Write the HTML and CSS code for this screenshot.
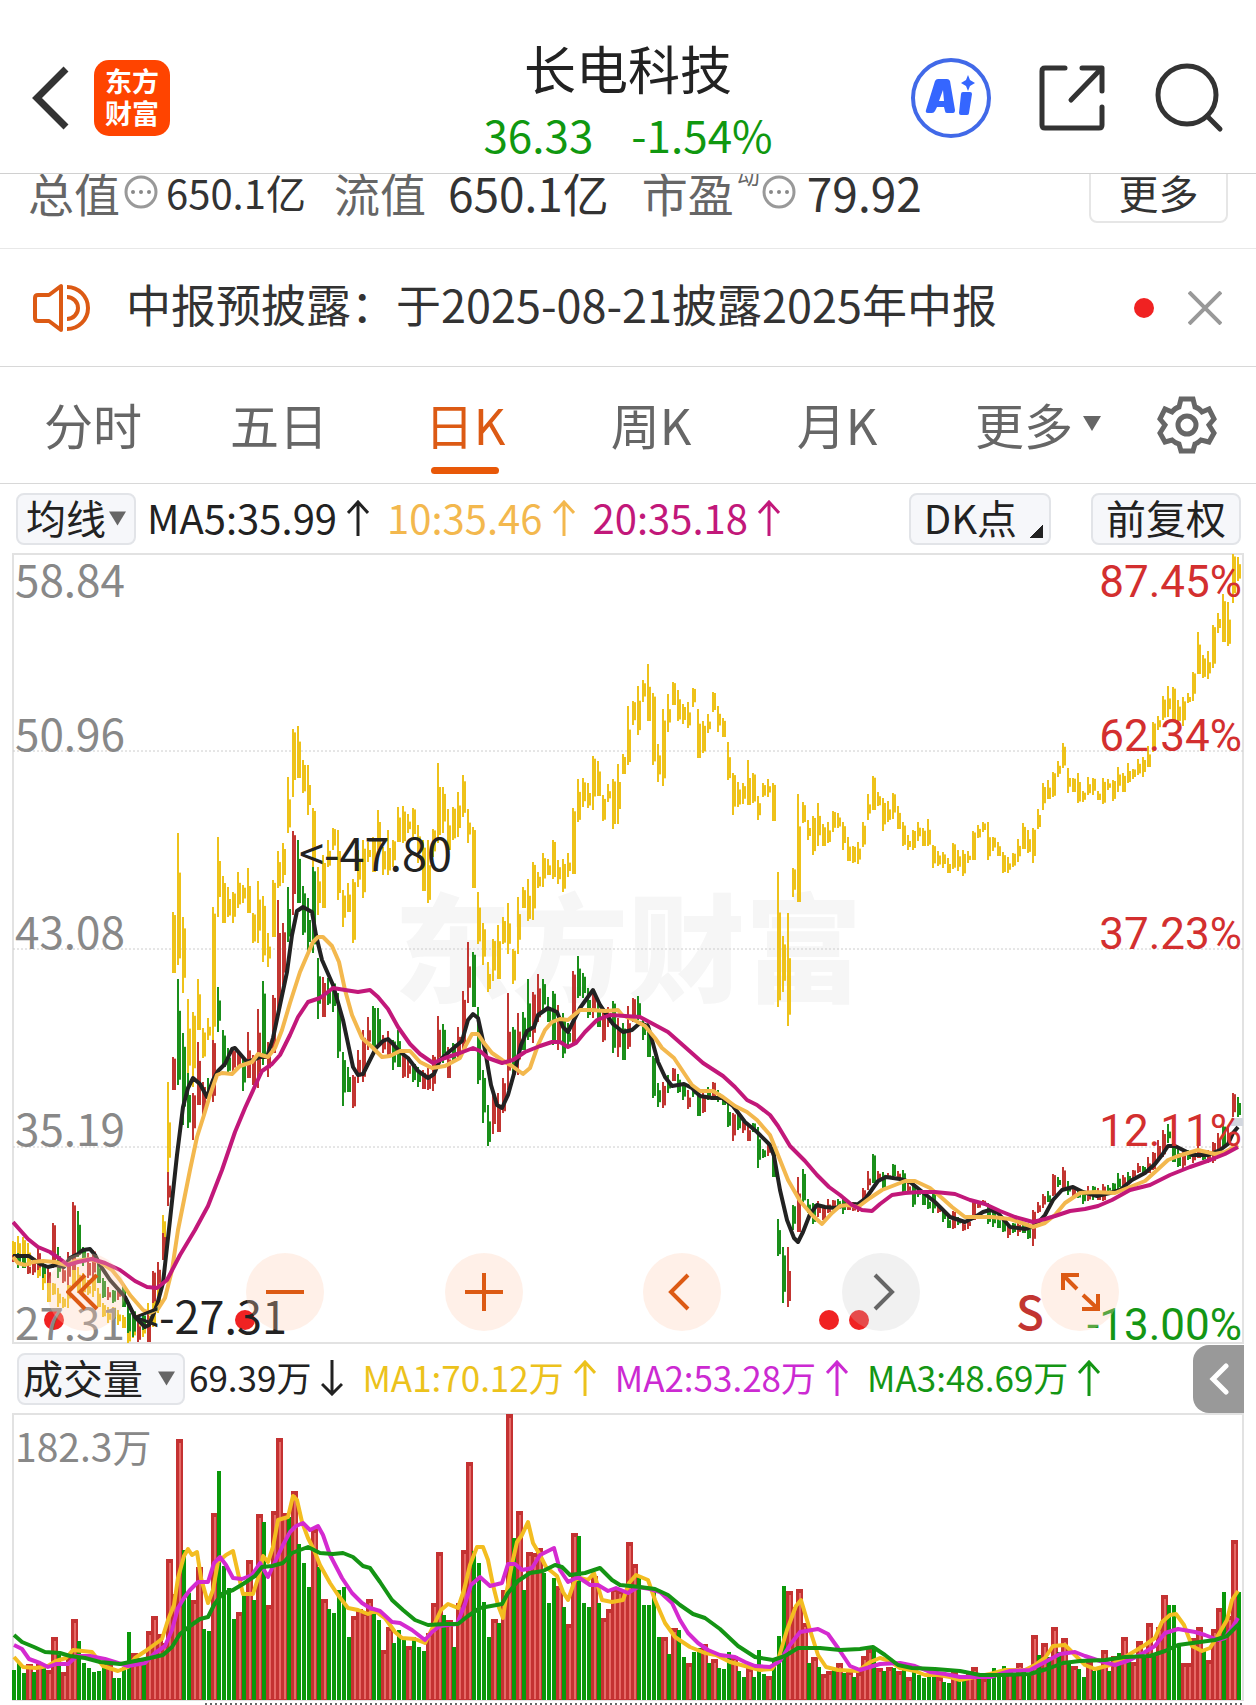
FILE: index.html
```html
<!DOCTYPE html>
<html lang="zh-CN">
<head>
<meta charset="utf-8">
<meta name="viewport" content="width=device-width">
<title>长电科技</title>
<link rel="stylesheet" href="styles.css">
</head>
<body>
<header class="topbar">
  <div class="topbar-left">
    <button class="icon-btn" type="button" aria-label="返回">
      <svg width="38" height="64" viewBox="0 0 38 64"><path d="M34 3 5 32 34 61" fill="none" stroke="#333" stroke-width="7"/></svg>
    </button>
    <a class="logo" href="#"><span>东方</span><span>财富</span></a>
  </div>
  <div class="title">
    <h1>长电科技</h1>
    <p class="quote"><span>36.33</span><span>-1.54%</span></p>
  </div>
  <div class="topbar-right">
    <button class="icon-btn" type="button" aria-label="AI">
      <svg width="82" height="82" viewBox="0 0 82 82"><circle cx="41" cy="41" r="38" fill="none" stroke="#4169e8" stroke-width="4"/><path fill="#3566ff" fill-rule="evenodd" d="M28 22h9q2 0 3 2l5 29q0 3-2 3h-6q-2 0-2-2l-1-4h-7l-2 4q-1 2-3 2h-4q-3 0-2-3l9-29q1-2 3-2zM33 33l-4 11h5z"/><path fill="#3566ff" d="M53 35h7q2 0 2 2l-3 19q0 2-2 2h-6q-2 0-2-2l2-19q0-2 2-2zM58 18l2 5 5 3-5 3-2 5-2-5-5-3 5-3z"/></svg>
    </button>
    <button class="icon-btn" type="button" aria-label="分享">
      <svg width="68" height="68" viewBox="0 0 68 68"><path d="M26 4H6Q3 4 3 7V61Q3 64 6 64H60Q63 64 63 61V43M43 4H63V27M61 6 32 36" fill="none" stroke="#333" stroke-width="5" stroke-linecap="round" stroke-linejoin="round"/></svg>
    </button>
    <button class="icon-btn" type="button" aria-label="搜索">
      <svg width="70" height="70" viewBox="0 0 70 70"><circle cx="33" cy="32" r="29" fill="none" stroke="#333" stroke-width="5"/><path d="M53 53 66 66" stroke="#333" stroke-width="5" stroke-linecap="round"/></svg>
    </button>
  </div>
</header>

<section class="metrics">
  <div class="metric"><span class="metric-name">总值</span><svg class="info" viewBox="0 0 34 34"><use href="#dots"/></svg><span class="metric-value small">650.1亿</span></div>
  <div class="metric"><span class="metric-name">流值</span><span class="metric-value wide">650.1亿</span></div>
  <div class="metric"><span class="metric-name">市盈</span><sup>动</sup><svg class="info tight" viewBox="0 0 34 34"><g id="dots"><circle cx="17" cy="17" r="15" fill="none" stroke="#999" stroke-width="3"/><circle cx="9" cy="17" r="2" fill="#888"/><circle cx="17" cy="17" r="2" fill="#888"/><circle cx="25" cy="17" r="2" fill="#888"/></g></svg><span class="metric-value">79.92</span></div>
  <button class="more-btn" type="button">更多</button>
</section>

<section class="notice">
  <svg width="60" height="50" viewBox="0 0 60 50" fill="none" stroke="#dc5a14" stroke-width="4"><path d="M29 3V47L17 38H6Q3 38 3 35V15Q3 12 6 12H17Z" stroke-linejoin="round"/><path d="M35 14a11 11 0 0 1 0 22M35 4a21 21 0 0 1 0 42"/></svg>
  <a href="#">中报预披露：于2025-08-21披露2025年中报</a>
  <i class="dot"></i>
  <button class="icon-btn" type="button" aria-label="关闭"><svg width="34" height="34" viewBox="0 0 34 34"><path d="M1 1 33 33M33 1 1 33" stroke="#999" stroke-width="4"/></svg></button>
</section>

<nav class="tabs">
  <button type="button">分时</button>
  <button type="button">五日</button>
  <button type="button" class="active">日K</button>
  <button type="button">周K</button>
  <button type="button">月K</button>
  <button type="button">更多<svg width="18" height="15" viewBox="0 0 18 15"><path d="M0 0H18L9 15Z" fill="#666"/></svg></button>
  <button type="button" aria-label="设置"><svg width="60" height="60" viewBox="0 0 60 60" fill="none" stroke="#666" stroke-width="5"><path d="M24 4H36L38 12Q42 13 45 17L52 14 57 24 52 30 57 38 52 47 44 45Q41 48 38 49L36 56H24L22 49Q18 48 15 45L8 47 3 38 8 30 3 24 8 14 15 17Q18 13 22 12Z"/><circle cx="30" cy="30" r="9"/></svg></button>
</nav>

<div class="bar">
  <button class="chip" type="button">均线<svg width="17" height="15" viewBox="0 0 18 15"><path d="M0 0H18L9 15Z" fill="#666"/></svg></button>
  <span class="ma ink">MA5:35.99<svg class="arrow" viewBox="0 0 22 36"><path d="M11 36V3M1 13 11 2 21 13"/></svg></span>
  <span class="ma orange">10:35.46<svg class="arrow" viewBox="0 0 22 36"><path d="M11 36V3M1 13 11 2 21 13"/></svg></span>
  <span class="ma magenta">20:35.18<svg class="arrow" viewBox="0 0 22 36"><path d="M11 36V3M1 13 11 2 21 13"/></svg></span>
  <button class="chip corner" type="button">DK点</button>
  <button class="chip" type="button">前复权</button>
</div>

<main>
  <div class="chart">
    <svg id="price" viewBox="12 553 1232 791" role="img" aria-label="日K线"></svg>
    <div class="tools">
      <button type="button" aria-label="最早"><svg viewBox="0 0 40 40"><path d="M19 3 2 20 19 37M31 3 14 20 31 37"/></svg></button>
      <button type="button" aria-label="缩小"><svg viewBox="0 0 40 40"><path d="M1 20H39"/></svg></button>
      <button type="button" aria-label="放大"><svg viewBox="0 0 40 40"><path d="M1 20H39M20 1V39"/></svg></button>
      <button type="button" aria-label="左移"><svg viewBox="0 0 40 40"><path d="M26 3 9 20 26 37"/></svg></button>
      <button type="button" aria-label="右移" class="off"><svg viewBox="0 0 40 40"><path d="M14 3 31 20 14 37"/></svg></button>
      <button type="button" aria-label="全屏"><svg viewBox="0 0 40 40"><path d="M3 18V3H19M4 4 17 17M38 22V37H22M37 36 23 23"/></svg></button>
    </div>
  </div>
  <div class="bar volume-bar">
    <button class="chip" type="button">成交量<svg class="far" width="17" height="15" viewBox="0 0 18 15"><path d="M0 0H18L9 15Z" fill="#666"/></svg></button>
    <span class="vol ink">69.39万<svg class="arrow" viewBox="0 0 22 36"><path d="M11 0V33M1 24 11 34 21 24"/></svg></span>
    <span class="vol yellow">MA1:70.12万<svg class="arrow" viewBox="0 0 22 36"><path d="M11 36V3M1 13 11 2 21 13"/></svg></span>
    <span class="vol violet">MA2:53.28万<svg class="arrow" viewBox="0 0 22 36"><path d="M11 36V3M1 13 11 2 21 13"/></svg></span>
    <span class="vol green">MA3:48.69万<svg class="arrow" viewBox="0 0 22 36"><path d="M11 36V3M1 13 11 2 21 13"/></svg></span>
    <button class="drawer" type="button" aria-label="展开"><svg width="20" height="32" viewBox="0 0 20 32"><path d="M17 3 4 16 17 29" fill="none" stroke="#fff" stroke-width="5" stroke-linecap="round"/></svg></button>
  </div>
  <div class="chart">
    <svg id="volume" viewBox="12 1413 1232 288" role="img" aria-label="成交量"></svg>
  </div>
  <div class="ticks"></div>
</main>
<script src="script.js"></script>
</body>
</html>
```
FILE: styles.css
```css
* { box-sizing: border-box; }
body {
  margin: 0;
  background: #fff;
  color: #333;
  font-family: "Noto Sans CJK SC", "Noto Sans", sans-serif;
}
button {
  margin: 0;
  padding: 0;
  border: 0;
  background: none;
  color: inherit;
  font: inherit;
}
svg { display: block; flex: none; }
a { color: inherit; text-decoration: none; }
h1, p { margin: 0; font-weight: 400; }

.topbar {
  display: grid;
  grid-template-columns: 1fr auto 1fr;
  height: 174px;
  padding: 0 32px;
  border-bottom: 1px solid #d0d0d0;
}
.topbar-left, .topbar-right {
  display: flex;
  align-items: center;
  height: 80px;
  margin-top: 58px;
}
.topbar-left { gap: 24px; }
.topbar-right { gap: 47px; justify-content: flex-end; }
.logo {
  display: flex;
  flex-direction: column;
  justify-content: center;
  width: 76px;
  height: 76px;
  padding-bottom: 2px;
  border-radius: 15px;
  background: #ff4400;
  color: #fff;
  font-size: 27px;
  font-weight: 700;
  line-height: 32px;
  text-align: center;
}
.title { padding-top: 38px; text-align: center; }
h1 { color: #222; font-size: 52px; line-height: 60px; }
.quote {
  display: flex;
  justify-content: center;
  gap: 38px;
  margin-top: 6px;
  color: #109810;
  font-size: 44px;
  line-height: 60px;
}

.metrics {
  display: flex;
  height: 75px;
  padding: 0 28px;
  overflow: hidden;
  border-bottom: 1px solid #e8e8e8;
  line-height: 60px;
}
.metric { display: flex; align-items: center; height: 60px; margin: -12px 28px 0 0; }
.metric:nth-child(2) { margin-right: 33px; }
.metric-name { color: #666; font-size: 46px; }
.metric-value { margin-left: 11px; font-size: 46px; }
.metric-value.small { margin-left: 8px; font-size: 40px; }
.metric-value.wide { margin-left: 22px; }
.metric sup { align-self: flex-start; margin-left: 3px; color: #666; font-size: 23px; line-height: 24px; }
.info { width: 34px; height: 34px; margin-left: 4px; }
.info.tight { margin-left: 2px; }
.more-btn {
  width: 139px;
  height: 62px;
  margin: -13px 0 0 auto;
  border: 2px solid #e6e6e6;
  border-radius: 8px;
  font-size: 40px;
  line-height: 50px;
}

.notice {
  display: flex;
  align-items: center;
  height: 118px;
  padding: 0 34px 0 32px;
  border-bottom: 1px solid #d8d8d8;
}
.notice a { margin: -8px auto 0 34px; font-size: 45px; }
.dot { width: 20px; height: 20px; margin-right: 34px; border-radius: 50%; background: #f02222; }

.tabs {
  display: grid;
  grid-template-columns: repeat(5, 186fr) 216fr 82fr;
  height: 117px;
  padding-right: 28px;
  border-bottom: 1px solid #d8d8d8;
  color: #666;
  font-size: 49px;
}
.tabs button {
  position: relative;
  display: flex;
  align-items: center;
  justify-content: center;
  gap: 10px;
  padding-bottom: 4px;
}
.tabs button:last-child { padding-bottom: 0; }
.tabs .active { color: #dc5a14; }
.tabs .active::after {
  content: "";
  position: absolute;
  bottom: 9px;
  width: 68px;
  height: 7px;
  border-radius: 4px;
  background: #e85808;
}

.bar { display: flex; align-items: center; height: 69px; padding: 0 15px 0 16px; }
.chip {
  display: flex;
  align-items: center;
  gap: 3px;
  height: 52px;
  padding: 0 8px 4px;
  border: 2px solid #e2e4e8;
  border-radius: 8px;
  background: #f6f7fa;
  color: #222;
  font-size: 40px;
  line-height: 46px;
}
.chip svg { margin-top: 4px; }
.chip .far { margin-left: 12px; }
.bar > .chip:last-child { padding: 0 13px 4px; }
.bar > .corner {
  margin: 0 40px 0 auto;
  padding: 0 32px 4px 13px;
  background: linear-gradient(135deg, transparent 50%, #222 50%) right 6px bottom 5px / 14px 14px no-repeat #f6f7fa;
}
.ma, .vol { display: flex; align-items: center; padding-bottom: 4px; line-height: 52px; }
.ma { margin-left: 18px; font-size: 40px; }
.vol { margin-left: 19px; font-size: 35px; }
.chip + .ma { margin-left: 11px; }
.chip + .vol { margin-left: 4px; }
.arrow { width: 22px; height: 36px; margin: 2px 0 0 10px; fill: none; stroke: currentColor; stroke-width: 3; }
.ink { color: #222; }
.orange { color: #f3b84e; }
.magenta { color: #c2187a; }
.yellow { color: #ecc21c; }
.violet { color: #cc2ad2; }
.green { color: #149614; }

main { padding: 0 12px; }
.chart { position: relative; }
.chart > svg { width: 100%; height: auto; }
.tools {
  position: absolute;
  right: 0;
  bottom: 13px;
  left: 0;
  display: flex;
  justify-content: space-between;
  padding: 0 125px 0 35px;
}
.tools button {
  display: grid;
  place-items: center;
  width: 78px;
  height: 78px;
  border-radius: 50%;
  background: rgba(255, 205, 180, 0.3);
}
.tools svg { width: 40px; height: 40px; fill: none; stroke: #dc5a14; stroke-width: 4; }
.tools .off { background: rgba(200, 200, 200, 0.25); }
.tools .off svg { stroke: #666; }

.volume-bar { padding: 0 0 0 5px; }
.volume-bar .chip { padding: 0 8px 4px 4px; }
.drawer {
  display: grid;
  place-items: center;
  width: 51px;
  height: 68px;
  margin-left: auto;
  border-radius: 16px 0 0 16px;
  background: #999;
}
.ticks {
  height: 2px;
  margin: 2px 0 0 193px;
  background: repeating-linear-gradient(90deg, #666 0 2px, transparent 2px 5px);
}

.frame { fill: none; stroke: #e2e2e2; stroke-width: 2; }
.grid { stroke: #ccc; stroke-dasharray: 2 2; }
.watermark { fill: #f6f6f6; font-size: 117px; font-weight: 900; text-anchor: middle; }
.axis { fill: #888; font-size: 44px; }
.axis.unit { font-size: 39px; }
.pct { font-family: Roboto, sans-serif; font-size: 44px; text-anchor: end; }
.up { fill: #d32f2f; }
.down { fill: #149614; }
.note { fill: #222; font-size: 45px; }
.sell { fill: #c23531; font-size: 46px; font-weight: 500; }
.event { fill: #f02222; }
.marker { fill: #d3d7df; }
.line { fill: none; stroke-width: 4; stroke-linejoin: round; }
```
FILE: script.js
```js
const STEP = 5;
const NS = "http://www.w3.org/2000/svg";
const COLORS = { y: "#eec21a", r: "#c23531", g: "#1a8f1a" };

// Sector index: high-low of each day
const sector = `1241-1262 1236-1260 1237-1258 1243-1267 1257-1275 1260-1278 1263-1290 1270-1302 1283-1295 1288-1307
1297-1308 1270-1308 1263-1287 1267-1293 1273-1297 1280-1295 1273-1297 1288-1307 1303-1317 1307-1323
1307-1320 1310-1325 1315-1328 1312-1343 1325-1338 1322-1333 1323-1337 1303-1335 1290-1327 1263-1313
1215-1257 1082-1183 912-973 833-965 917-993 999-1073 1012-1087 979-1030 1028-1058 1018-1040
907-1040 837-917 876-923 887-917 892-923 872-908 885-903 868-913 913-943 881-943
896-962 933-967 880-937 851-888 843-883 777-833 729-797 726-778 760-793 765-815
808-867 867-915 855-908 840-867 828-850 830-900 890-927 883-912 879-943 850-887
840-898 842-862 837-872 810-850 847-875 830-875 840-867 807-842 806-843 814-833
808-837 825-863 840-891 840-903 829-857 763-843 787-833 809-850 807-840 792-837
775-817 809-843 827-888 892-944 923-965 962-992 939-981 925-979 917-944 903-954
949-984 897-954 887-908 879-921 862-920 872-888 853-887 859-875 840-879 860-884
859-892 853-877 808-874 779-822 778-807 783-808 756-810 761-796 795-821 784-802
779-829 764-824 754-774 706-765 701-725 686-735 680-702 664-721 693-765 744-782
709-786 694-732 682-705 690-721 704-724 702-728 688-707 709-758 721-753 714-733
692-712 706-732 718-737 742-780 773-815 782-807 783-804 760-805 773-803 796-820
783-797 779-797 783-821 872-1007 936-992 913-1026 868-897 794-902 802-823 820-840
816-855 803-846 824-846 822-843 811-832 813-828 822-850 837-861 846-863 842-864
822-847 794-820 776-810 792-806 798-831 801-822 793-819 806-829 822-846 835-850
830-850 822-841 828-846 819-846 845-868 851-866 852-868 858-873 843-869 850-871
850-876 851-863 831-860 825-838 822-832 822-860 837-851 842-856 852-873 857-873
853-867 839-862 823-849 830-853 828-863 809-829 783-810 780-799 772-797 761-777
743-768 768-793 778-792 773-803 791-802 777-795 778-795 791-800 778-804 779-790
780-801 767-792 773-792 763-783 769-779 759-775 757-777 746-767 722-752 716-730
696-720 686-717 687-720 700-722 697-726 693-703 672-701 632-674 655-678 651-679
625-668 613-633 594-642 602-646 554-603 557-581`;

// Stock: r = rise, g = fall, high-low of each day
const stock = `r1255-1262 g1253-1268 g1255-1268 r1262-1274 r1262-1275 r1246-1270 g1262-1278 r1265-1283 r1223-1268 g1247-1278
r1268-1283 r1252-1285 r1202-1270 g1211-1257 g1247-1266 r1253-1278 r1250-1280 g1262-1283 g1278-1298 r1287-1300
g1290-1303 r1287-1300 g1283-1307 g1300-1333 g1310-1337 r1320-1342 g1313-1330 r1310-1342 r1271-1303 r1262-1288
r1233-1260 r1172-1206 r1057-1090 g979-1085 g1033-1125 g1073-1128 r1093-1140 r1042-1105 r1082-1115 g1078-1098
r1040-1102 g987-1032 g1030-1067 g1048-1072 r1050-1072 r1050-1070 g1057-1091 r1032-1078 r1055-1085 r1009-1088
g981-1065 r1042-1077 r995-1053 r900-1010 r923-985 g887-942 r831-915 g840-903 g886-935 g898-953
g867-953 g958-1019 r977-1017 g978-1005 g982-1012 g993-1058 g1052-1106 g1067-1092 r1075-1108 r1050-1083
r1030-1082 r1017-1050 g1006-1047 g1008-1045 r1035-1053 r1031-1057 g1040-1070 g1030-1067 r1053-1078 r1057-1078
g1063-1082 g1067-1087 r1070-1089 r1068-1090 r1055-1091 r1016-1062 g1024-1063 r1047-1078 g1043-1062 r1027-1060
r991-1050 r942-1003 g952-1007 g1007-1084 g1070-1123 g1105-1146 r1094-1134 r1093-1132 r1078-1113 r993-1090
g1027-1080 r1013-1075 g1012-1050 g979-1040 r992-1043 r974-1022 g979-1013 g997-1022 g991-1045 r1005-1050
g1013-1058 g1023-1048 r971-1043 g956-998 g973-998 g988-1018 r992-1018 g1003-1027 r1008-1042 r1007-1027
g1001-1053 r1018-1057 g1023-1060 r1006-1049 r998-1022 g996-1020 g1020-1040 g1023-1057 g1056-1098 g1083-1107
r1082-1108 g1075-1093 r1068-1081 g1074-1093 g1083-1100 r1090-1109 g1086-1097 g1090-1116 r1093-1113 g1087-1100
r1082-1098 g1090-1102 g1097-1105 g1102-1127 r1113-1141 g1113-1130 r1122-1133 r1123-1141 g1123-1132 g1127-1168
g1149-1158 r1143-1156 g1147-1177 g1219-1256 g1247-1303 r1247-1307 g1205-1230 r1177-1232 g1169-1202 g1199-1213
g1203-1224 r1201-1217 r1207-1220 r1199-1213 r1200-1208 g1199-1206 g1198-1214 r1200-1210 r1202-1211 r1203-1212
r1188-1203 r1171-1190 g1154-1183 r1171-1180 g1172-1191 r1173-1179 g1164-1180 r1171-1180 g1170-1192 r1182-1193
g1183-1207 g1188-1197 g1193-1205 g1197-1209 g1190-1213 r1203-1213 g1210-1222 g1215-1228 r1211-1229 g1217-1225
r1223-1231 r1217-1229 r1202-1220 r1202-1208 r1200-1205 g1203-1224 g1212-1227 g1217-1228 g1220-1232 r1223-1238
g1223-1233 r1220-1236 g1225-1233 g1223-1239 r1210-1246 r1202-1213 r1194-1208 g1191-1202 r1174-1196 g1177-1187
r1167-1190 g1181-1195 r1187-1196 g1188-1198 g1190-1204 r1186-1201 g1186-1200 r1188-1200 r1184-1201 g1185-1192
g1183-1193 g1173-1192 r1175-1190 g1172-1182 r1170-1178 r1163-1173 g1166-1173 r1157-1173 r1152-1170 r1140-1160
r1130-1157 g1124-1143 g1143-1162 g1147-1167 r1152-1169 g1150-1160 r1152-1163 r1145-1158 g1150-1160 r1150-1163
r1142-1163 r1133-1153 g1123-1147 r1128-1143 r1093-1117 g1097-1117`;

const ma5 = "13,1256 29,1256 40,1264 48,1267 56,1265 64,1267 70,1258 78,1254 83,1250 90,1249 95,1255 100,1265 110,1280 125,1297 135,1317 145,1327 149,1325 157,1305 163,1283 170,1220 177,1155 183,1107 188,1088 193,1078 200,1084 207,1097 213,1080 218,1071 225,1064 232,1049 235,1048 241,1055 247,1062 253,1060 260,1057 267,1057 273,1038 280,1005 287,972 292,935 297,911 303,907 312,912 316,935 322,960 333,985 343,1020 353,1067 358,1075 363,1074 370,1060 376,1048 383,1041 388,1039 393,1044 400,1052 408,1058 418,1071 428,1078 434,1074 440,1060 450,1051 462,1041 468,1020 473,1014 478,1018 485,1050 491,1085 497,1105 502,1108 508,1095 515,1070 521,1045 527,1031 534,1027 538,1015 548,1008 557,1012 563,1027 568,1032 573,1022 580,1008 593,990 600,1005 613,1024 623,1032 632,1030 640,1023 648,1026 652,1040 658,1062 665,1077 672,1086 684,1084 692,1088 700,1096 712,1098 722,1098 733,1106 745,1122 757,1132 770,1145 774,1156 780,1190 787,1220 794,1238 798,1242 803,1232 810,1214 817,1205 825,1207 835,1208 845,1205 858,1204 866,1198 878,1181 886,1177 900,1179 910,1182 920,1190 935,1202 950,1217 965,1222 975,1217 983,1212 990,1210 998,1213 1010,1227 1025,1229 1035,1226 1045,1215 1053,1200 1062,1190 1073,1187 1083,1192 1097,1196 1110,1193 1120,1190 1132,1180 1145,1173 1155,1164 1162,1155 1168,1146 1175,1146 1185,1151 1192,1155 1208,1155 1220,1150 1228,1144 1233,1133 1238,1127";
const ma10 = "13,1257 18,1263 25,1265 33,1262 43,1261 55,1262 66,1265 75,1261 90,1259 100,1262 112,1270 120,1280 130,1295 143,1310 150,1313 158,1309 165,1298 172,1270 178,1230 184,1200 190,1170 197,1137 204,1115 210,1095 217,1075 222,1073 232,1074 240,1066 252,1062 258,1054 268,1057 275,1048 282,1030 290,1003 300,972 306,958 313,942 318,937 323,937 332,946 339,962 345,990 352,1015 362,1038 372,1047 382,1057 390,1056 400,1051 410,1051 420,1062 432,1068 445,1066 460,1058 466,1045 472,1034 478,1034 484,1043 492,1053 502,1060 512,1066 523,1074 530,1068 538,1045 545,1030 552,1022 560,1019 568,1020 580,1010 592,1010 605,1011 618,1010 622,1015 634,1020 645,1026 655,1038 662,1048 674,1058 682,1070 692,1085 700,1091 713,1091 723,1097 735,1106 747,1112 757,1120 770,1135 778,1155 788,1180 800,1201 812,1215 822,1224 832,1213 840,1206 848,1205 858,1207 870,1198 882,1190 895,1185 905,1181 915,1181 930,1188 942,1198 952,1207 965,1217 978,1217 992,1217 1010,1219 1022,1223 1033,1227 1045,1223 1055,1215 1065,1203 1080,1193 1095,1192 1115,1193 1130,1187 1145,1181 1155,1172 1168,1160 1178,1156 1188,1153 1198,1150 1215,1154 1225,1152 1238,1145";
const ma20 = "13,1222 20,1230 28,1239 38,1247 50,1252 60,1259 68,1265 78,1262 92,1259 105,1263 120,1270 135,1281 147,1287 157,1288 167,1280 180,1255 195,1230 208,1206 222,1170 235,1132 245,1108 255,1086 262,1071 272,1064 280,1055 290,1035 298,1017 308,1002 320,998 333,988 345,990 358,992 370,990 378,997 388,1009 398,1027 410,1044 420,1054 433,1063 445,1058 460,1053 473,1048 480,1051 488,1058 502,1063 513,1060 525,1052 540,1046 552,1042 560,1042 568,1047 576,1043 585,1032 597,1020 610,1015 625,1016 640,1017 655,1025 668,1032 685,1047 703,1063 723,1076 735,1087 747,1100 757,1105 770,1115 778,1126 790,1146 805,1161 817,1175 829,1187 840,1195 852,1205 862,1210 872,1211 880,1204 892,1195 905,1193 920,1192 935,1192 955,1194 970,1200 985,1204 1000,1211 1015,1217 1033,1222 1045,1219 1055,1216 1070,1211 1085,1209 1098,1206 1112,1200 1130,1190 1150,1185 1170,1175 1190,1167 1210,1160 1225,1154 1238,1147";

// Volume: direction and bar height of each day
const volume = `g30 g37 g27 r36 g28 r36 g33 r30 r63 g45 r28 r42 r81 g59 g37 g32 g28 g29 g37 r37 g22 g22 g33 g68 r47 r42 g40 r69 r84 r66
r57 r141 r106 r261 g150 g107 r100 r133 g71 g69 r187 g229 g134 g112 g81 r88 g107 r140 g100 r186 g178 r95 r189 r262 r187 g183 r209 g156 g137 g113
r171 g133 r101 g91 g87 g110 g113 g63 r84 r91 r88 r101 g88 g80 r50 r73 g57 g70 g61 r54 g63 g53 g49 r67 r97 r148 g85 r80 g53 r97
r150 r238 g149 g137 g98 g63 r81 g77 r110 r286 g162 r189 g110 r148 r147 r152 g127 g97 g122 r114 g93 r76 r167 g164 g97 g93 r124 g97 r82 r91
r112 r110 r107 r158 r136 g122 g95 g95 g112 g63 r63 g46 r72 g70 g43 r37 g48 g52 r56 g37 r41 g32 g31 g48 r44 g29 g23 r32 g23 g50
g26 r24 g40 g64 g114 r109 r93 r111 r77 g37 r43 g33 r26 r29 g30 r37 g27 r29 g23 r28 r44 r51 g53 r32 g29 r33 g32 r29 g31 r23
g28 g25 g22 g25 g25 r23 g18 g17 r28 g22 g20 r27 r33 g25 r22 g25 g32 g25 g34 r28 g27 r37 g28 g24 r65 g45 r57 g43 r73 g48
r62 g38 r34 g31 g23 r38 g29 g32 r50 g29 r44 g47 r63 g45 r38 r59 g45 r77 g47 r73 r105 g95 g95 g55 r37 r37 r62 r73 g49 r40
r71 r92 g108 r84 r160 g108`;

const vma1 = "14,1657 23,1667 36,1668 48,1666 56,1661 66,1658 73,1650 92,1652 103,1666 118,1671 128,1667 135,1658 147,1650 162,1639 168,1620 174,1605 178,1578 184,1556 188,1549 192,1555 197,1552 201,1578 208,1603 213,1590 218,1562 226,1555 233,1551 238,1573 243,1594 253,1594 260,1572 263,1556 268,1562 273,1547 278,1520 288,1517 293,1496 297,1500 302,1522 308,1538 314,1550 320,1565 330,1583 338,1595 348,1608 358,1610 368,1614 375,1611 385,1618 395,1632 402,1638 415,1639 425,1643 433,1627 441,1610 448,1604 458,1608 464,1590 470,1565 477,1547 483,1547 488,1560 493,1585 498,1605 503,1618 507,1590 512,1564 517,1542 522,1535 528,1522 533,1543 540,1555 546,1567 557,1576 563,1592 568,1600 575,1580 580,1578 588,1580 594,1573 602,1600 612,1602 623,1600 629,1583 636,1575 648,1580 655,1600 665,1623 675,1637 690,1647 705,1653 716,1655 730,1662 745,1666 760,1670 772,1669 778,1660 787,1630 796,1606 801,1600 810,1630 818,1655 826,1667 838,1670 858,1671 870,1662 880,1658 890,1661 900,1668 915,1671 925,1675 938,1675 950,1677 960,1680 975,1677 990,1674 1005,1670 1025,1670 1035,1665 1045,1658 1053,1646 1065,1645 1075,1655 1085,1665 1095,1669 1110,1665 1120,1660 1130,1654 1145,1645 1155,1638 1162,1622 1170,1615 1176,1614 1184,1625 1192,1646 1202,1651 1210,1648 1217,1637 1227,1620 1232,1600 1238,1591";
const vma2 = "14,1645 22,1649 29,1659 40,1663 48,1667 56,1664 68,1664 77,1656 90,1656 105,1659 118,1663 128,1666 145,1663 155,1653 165,1646 172,1630 178,1608 184,1598 190,1590 198,1582 208,1582 214,1563 220,1557 226,1565 233,1578 242,1579 252,1575 260,1563 268,1577 275,1562 283,1545 290,1532 296,1526 303,1523 310,1530 318,1526 323,1535 330,1555 342,1578 352,1593 362,1603 370,1608 380,1611 392,1622 400,1623 412,1630 425,1640 432,1632 440,1626 457,1624 465,1604 471,1585 480,1577 490,1586 502,1583 508,1564 515,1564 522,1570 532,1568 540,1555 554,1548 560,1570 568,1582 578,1577 590,1585 598,1585 608,1591 616,1588 628,1593 638,1587 650,1589 660,1592 672,1603 680,1620 688,1633 698,1643 708,1650 720,1655 735,1657 745,1662 755,1666 770,1667 780,1661 790,1645 800,1632 818,1629 828,1634 838,1648 850,1666 860,1670 870,1667 880,1664 900,1663 915,1666 930,1672 945,1674 960,1677 990,1677 1010,1671 1030,1670 1045,1662 1060,1654 1075,1652 1085,1656 1100,1661 1115,1665 1130,1660 1145,1652 1155,1646 1165,1633 1178,1629 1195,1632 1205,1635 1218,1640 1225,1638 1232,1628 1238,1618";
const vma3 = "14,1635 22,1642 34,1647 45,1652 60,1653 70,1656 85,1658 100,1662 120,1664 135,1661 150,1658 163,1655 172,1647 180,1634 190,1626 200,1619 208,1617 214,1605 222,1594 233,1590 243,1584 255,1576 262,1567 272,1566 283,1563 292,1553 308,1547 320,1553 333,1554 343,1553 353,1557 363,1566 370,1568 380,1582 392,1600 403,1610 415,1620 428,1625 445,1624 458,1624 468,1616 480,1608 502,1604 508,1593 518,1581 530,1573 543,1571 555,1565 562,1567 570,1575 585,1573 600,1568 612,1580 620,1585 640,1587 655,1589 668,1595 680,1605 693,1614 705,1618 720,1629 738,1646 755,1657 773,1660 785,1656 798,1648 820,1648 840,1650 860,1649 873,1647 885,1655 898,1665 912,1668 935,1669 960,1671 980,1675 1000,1675 1030,1674 1050,1668 1063,1663 1080,1661 1105,1660 1125,1657 1150,1656 1165,1651 1178,1645 1200,1642 1215,1640 1227,1636 1238,1625";

function add(parent, name, attrs, text) {
  const el = document.createElementNS(NS, name);
  for (const key in attrs) el.setAttribute(key, attrs[key]);
  if (text) el.textContent = text;
  parent.appendChild(el);
  return el;
}

function sticks(svg, data) {
  data.split(/\s+/).forEach((item, i) => {
    const [, tone, hi, lo] = item.match(/([rg]?)(\d+)-(\d+)/);
    const x = 13 + i * STEP;
    const top = +hi;
    const range = lo - top;
    const fill = COLORS[tone || "y"];
    const from = [0.05, 0.3, 0.15, 0.4][i % 4];
    const to = [0.9, 0.75, 1, 0.95, 0.8][i % 5];
    add(svg, "rect", { x: x - 1, y: top, width: 2, height: range, fill });
    add(svg, "rect", { x: x - 1, y: top + range * from, width: 4, height: range * (to - from), fill });
  });
}

function line(svg, points, stroke) {
  add(svg, "polyline", { class: "line", points, stroke });
}

function frame(svg, x, y, width, height) {
  add(svg, "rect", { class: "frame", x, y, width, height });
}

const price = document.getElementById("price");
add(price, "text", { class: "watermark", x: 628, y: 993 }, "东方财富");
frame(price, 13, 554, 1230, 789);
[751, 949, 1147].forEach(y => add(price, "line", { class: "grid", x1: 13, x2: 1243, y1: y, y2: y }));
sticks(price, sector);
sticks(price, stock);
add(price, "rect", { class: "marker", x: 1231, y: 1118, width: 12, height: 8 });
line(price, ma5, "#222");
line(price, ma10, "#f3b84e");
line(price, ma20, "#c2187a");
[54, 245, 829, 859].forEach(cx => add(price, "circle", { class: "event", cx, cy: 1320, r: 10 }));
[["58.84", "87.45%", 597], ["50.96", "62.34%", 751], ["43.08", "37.23%", 949], ["35.19", "12.11%", 1146], ["27.31", "-13.00%", 1340]].forEach(([left, right, y]) => {
  add(price, "text", { class: "axis", x: 15, y }, left);
  add(price, "text", { class: "pct " + (right[0] === "-" ? "down" : "up"), x: 1242, y }, right);
});
add(price, "text", { class: "note", x: 299, y: 871 }, "<-47.80");
add(price, "text", { class: "note", x: 134, y: 1334 }, "<-27.31");
add(price, "text", { class: "sell", x: 1016, y: 1330 }, "S");

const vol = document.getElementById("volume");
frame(vol, 13, 1414, 1230, 287);
volume.split(/\s+/).forEach((item, i) => {
  const h = +item.slice(1);
  const x = 14 + i * STEP;
  if (item[0] === "g") {
    add(vol, "rect", { x: x - 2, y: 1700 - h, width: 4, height: h, fill: "#0a980a" });
  } else {
    add(vol, "rect", { x: x - 3, y: 1700 - h, width: 7, height: h, fill: "#c43232" });
    add(vol, "rect", { x, y: 1704 - h, width: 2, height: h - 5, fill: "#e66a66" });
  }
});
line(vol, vma1, "#f3bd20");
line(vol, vma2, "#d42ad0");
line(vol, vma3, "#149414");
add(vol, "text", { class: "axis unit", x: 15, y: 1462 }, "182.3万");
```
